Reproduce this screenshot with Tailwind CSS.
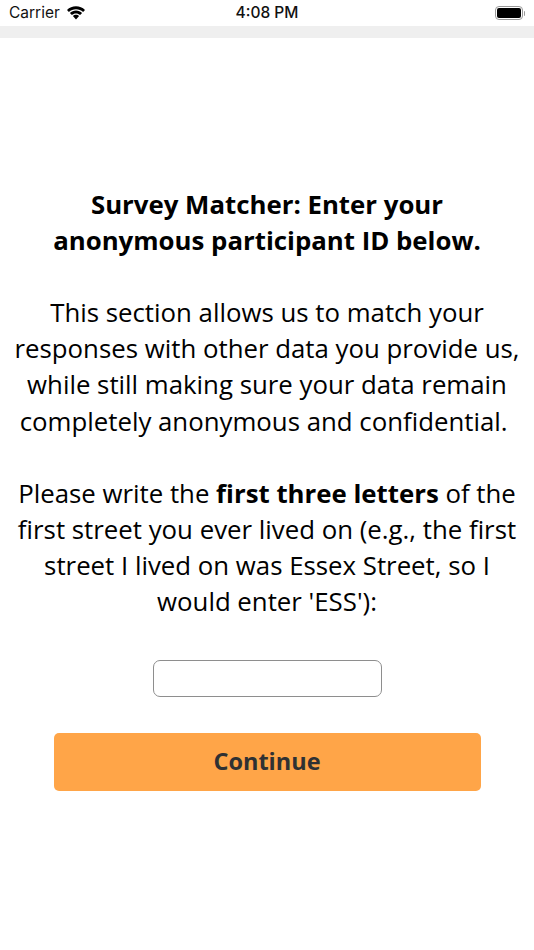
<!DOCTYPE html>
<html>
<head>
<title>Survey Matcher</title>
<meta charset="utf-8">
<meta name="viewport" content="width=device-width, initial-scale=1">
<script src="https://cdn.jsdelivr.net/npm/@tailwindcss/browser@4"></script>
</head>
<body class="bg-white w-[534px] h-[950px] overflow-hidden font-['Open_Sans',sans-serif] text-black">
  <!-- status bar -->
  <div class="grid grid-cols-3 items-center h-[26px] px-[9px] font-['Inter',sans-serif] text-[15.500px] text-[#111]">
    <div class="flex items-center gap-[6px]">
      <span>Carrier</span>
      <svg width="20" height="15" viewBox="0 0 20 15" fill="#000"><path d="M10 3.200c2.700 0 5.200 1 7.100 2.800l1.900-2C16.600 1.600 13.500.3 10 .3S3.400 1.600 1 4l1.900 2c1.900-1.800 4.400-2.800 7.100-2.800z"/><path d="M10 7.400c1.600 0 3 .6 4.100 1.600l2-2.100C14.500 5.400 12.400 4.500 10 4.500S5.500 5.400 3.900 6.900l2 2.100C7 8 8.400 7.400 10 7.400z"/><path d="M10 8.800c-1.200 0-2.300.5-3.100 1.300L10 13.400l3.100-3.300c-.8-.8-1.900-1.300-3.100-1.300z"/></svg>
    </div>
    <div class="text-center font-medium">4:08 PM</div>
    <div class="flex justify-end items-center">
      <div class="w-[28px] h-[14px] rounded-[4px] border-[1.500px] border-[#999] p-[1px]"><div class="w-full h-full rounded-[2px] bg-black"></div></div>
      <div class="w-[1.500px] h-[5px] ml-px bg-[#999] rounded-r-sm"></div>
    </div>
  </div>
  <div class="h-[12px] bg-[#efefef]"></div>

  <!-- survey text -->
  <div class="pt-[147.500px] flex flex-col items-center">
    <div class="text-center text-[25.800px] leading-[36.200px] whitespace-nowrap">
      <p class="font-bold">Survey Matcher: Enter your<br>anonymous participant ID below.</p>
      <p class="mt-[36px]">This section allows us to match your<br>responses with other data you provide us,<br>while still making sure your data remain<br>completely anonymous and confidential.&nbsp;</p>
      <p class="mt-[36px]">Please write the <b>first three letters</b> of the<br>first street you ever lived on (e.g., the first<br>street I lived on was Essex Street, so I<br>would enter 'ESS'):</p>
    </div>
    <input type="text" class="mt-[40.500px] w-[229px] h-[37px] rounded-[7px] border-[1.300px] border-[#8e8e8e] bg-white">
    <button type="button" class="mt-[36px] w-[427px] h-[58px] rounded-[5px] bg-[#ffa548] text-[#2f3133] text-[23.500px] font-bold">Continue</button>
  </div>
</body>
</html>
